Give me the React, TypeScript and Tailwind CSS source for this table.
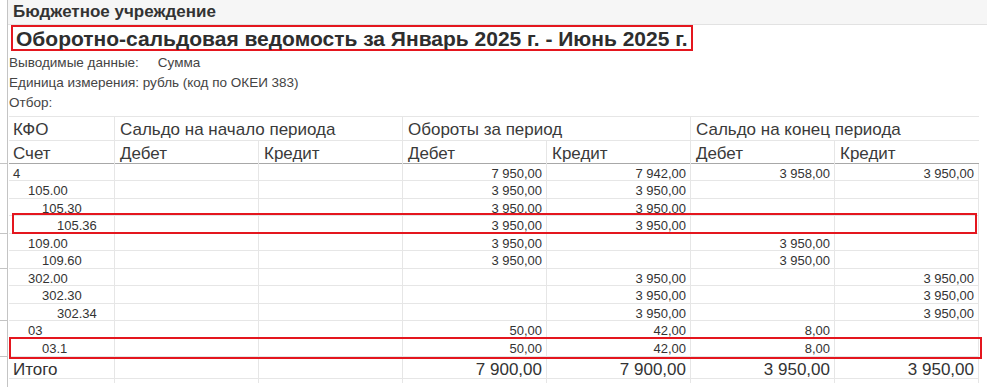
import React from "react";

type Row = { acc: string; lvl: number; v: string[]; h: number; box?: 1 | 2 };

const A = ["", "", "3 950,00", "3 950,00", "", ""];
const B = ["", "", "3 950,00", "", "3 950,00", ""];
const C = ["", "", "", "3 950,00", "", "3 950,00"];
const D = ["", "", "50,00", "42,00", "8,00", ""];

const rows: Row[] = [
  { acc: "4", lvl: 0, v: ["", "", "7 950,00", "7 942,00", "3 958,00", "3 950,00"], h: 17 },
  { acc: "105.00", lvl: 1, v: A, h: 18 },
  { acc: "105.30", lvl: 2, v: A, h: 17 },
  { acc: "105.36", lvl: 3, v: A, h: 18, box: 1 },
  { acc: "109.00", lvl: 1, v: B, h: 17 },
  { acc: "109.60", lvl: 2, v: B, h: 18 },
  { acc: "302.00", lvl: 1, v: C, h: 17 },
  { acc: "302.30", lvl: 2, v: C, h: 18 },
  { acc: "302.34", lvl: 3, v: C, h: 17 },
  { acc: "03", lvl: 1, v: D, h: 18 },
  { acc: "03.1", lvl: 2, v: D, h: 18, box: 2 },
];

const indent = ["pl-[4px]", "pl-[19px]", "pl-[33px]", "pl-[48px]"];
const grid = "grid grid-cols-[106px_repeat(6,144px)]";

export default function App() {
  return (
    <div className="w-[987px] h-[387px] overflow-hidden bg-white flex font-['Liberation_Sans',Arial,sans-serif] text-[#333]">
      {/* gutter */}
      <div className="w-[8px] shrink-0 border-r border-[#c4c4c4] flex flex-col">
        <div className="h-[164px] border-b border-[#c4c4c4]" />
        <div className="h-[70px] border-b border-[#c4c4c4]" />
        <div className="h-[35px] border-b border-[#c4c4c4]" />
        <div className="h-[52px] border-b border-[#c4c4c4]" />
        <div className="h-[36px] border-b border-[#c4c4c4]" />
      </div>

      <div className="flex-1 flex flex-col">
        <div className="h-[25px] bg-[#f6f6f6] border-b border-[#e2e2e2] flex items-center pl-[5px] text-[17px] font-bold text-[#333]">
          Бюджетное учреждение
        </div>
        <div className="ml-[3px] w-fit h-[26px] border-2 border-[#e4161e] flex items-center px-[3px] text-[21px] font-bold text-[#2e2e2e] leading-none">
          Оборотно-сальдовая ведомость за Январь 2025 г. - Июнь 2025 г.
        </div>
        <div className="mt-[2px] flex flex-col text-[13.5px] text-[#444] pl-[1px]">
          <div className="h-[20px] flex items-center">
            Выводимые данные:<span className="ml-[19px]">Сумма</span>
          </div>
          <div className="h-[20px] flex items-center">Единица измерения: рубль (код по ОКЕИ 383)</div>
          <div className="h-[20px] flex items-center">Отбор:</div>
        </div>

        <div className="ml-[1px] mt-[3px] flex flex-col w-fit">
          {/* header */}
          <div className={`${grid} h-[24px] border-t border-[#e6e6e6] text-[17px] text-[#3a3a3a]`}>
            <div className="flex items-center pl-[4px] border-r border-[#e6e6e6]">КФО</div>
            <div className="col-span-2 flex items-center pl-[5px] border-r border-[#e6e6e6]">Сальдо на начало периода</div>
            <div className="col-span-2 flex items-center pl-[5px] border-r border-[#e6e6e6]">Обороты за период</div>
            <div className="col-span-2 flex items-center pl-[5px]">Сальдо на конец периода</div>
          </div>
          <div className={`${grid} h-[24px] border-t border-b border-t-[#e6e6e6] border-b-[#a8a8a8] text-[17px] text-[#3a3a3a]`}>
            {["Счет", "Дебет", "Кредит", "Дебет", "Кредит", "Дебет", "Кредит"].map((t, i) => (
              <div key={i} className={`flex items-center ${i === 0 ? "pl-[4px]" : "pl-[5px]"} ${i < 6 ? "border-r border-[#e6e6e6]" : ""}`}>
                {t}
              </div>
            ))}
          </div>

          {rows.map((r, ri) => (
            <div
              key={ri}
              className={`relative ${grid} border-b border-[#e6e6e6] text-[13px] text-[#333] ${r.h === 17 ? "h-[17px]" : "h-[18px]"}`}
            >
              <div className={`flex items-center ${indent[r.lvl]} border-r border-[#e6e6e6]`}>{r.acc}</div>
              {r.v.map((v, i) => (
                <div key={i} className="flex items-center justify-end pr-[4px] border-r border-[#e6e6e6]">
                  {v}
                </div>
              ))}
              {r.box === 1 && (
                <div className="absolute left-[3px] right-[2px] -top-[3px] -bottom-[1px] border-2 border-[#e4161e]" />
              )}
              {r.box === 2 && (
                <div className="absolute -left-[0px] -right-[3px] -top-[2px] -bottom-[3px] border-2 border-[#e4161e]" />
              )}
            </div>
          ))}

          <div className={`${grid} h-[22px] border-b border-[#e6e6e6] text-[17px] text-[#333]`}>
            <div className="flex items-center pl-[4px] border-r border-[#e6e6e6]">Итого</div>
            {["", "", "7 900,00", "7 900,00", "3 950,00", "3 950,00"].map((v, i) => (
              <div key={i} className="flex items-center justify-end pr-[4px] border-r border-[#e6e6e6]">
                {v}
              </div>
            ))}
          </div>
        </div>
      </div>
    </div>
  );
}
